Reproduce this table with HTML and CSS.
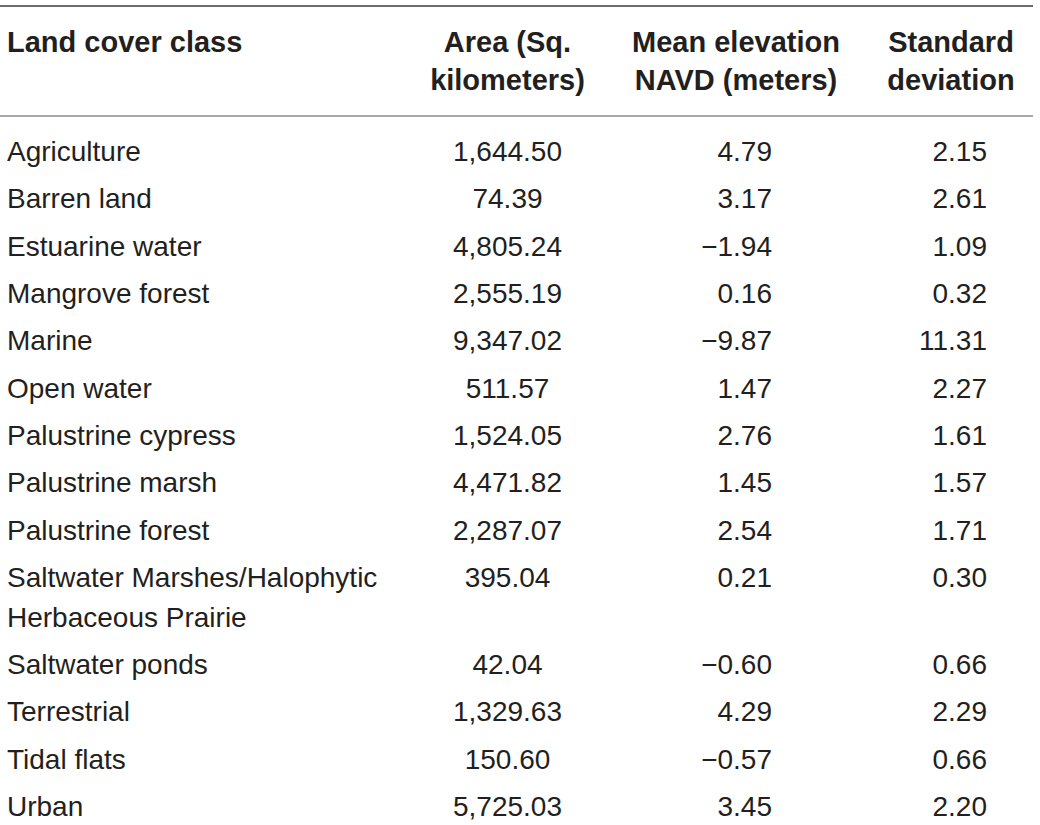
FILE: index.html
```html
<!DOCTYPE html>
<html lang="en">

<head>
    <meta charset="UTF-8">
    <meta name="viewport" content="width=device-width, initial-scale=1.0">
    <title>Land cover classes</title>
    <link rel="stylesheet" href="styles.css">
</head>

<body>
    <table class="data-table">
        <colgroup>
            <col class="col-class">
            <col class="col-area">
            <col class="col-mean">
            <col class="col-std">
        </colgroup>
        <thead>
            <tr>
                <th class="name">Land cover class</th>
                <th>Area (Sq.<br>kilometers)</th>
                <th>Mean elevation<br>NAVD (meters)</th>
                <th class="std">Standard<br>deviation</th>
            </tr>
        </thead>
        <tbody>
            <tr class="first-row">
                <td class="name">Agriculture</td>
                <td class="area">1,644.50</td>
                <td class="mean">4.79</td>
                <td class="std">2.15</td>
            </tr>
            <tr>
                <td class="name">Barren land</td>
                <td class="area">74.39</td>
                <td class="mean">3.17</td>
                <td class="std">2.61</td>
            </tr>
            <tr>
                <td class="name">Estuarine water</td>
                <td class="area">4,805.24</td>
                <td class="mean">&minus;1.94</td>
                <td class="std">1.09</td>
            </tr>
            <tr>
                <td class="name">Mangrove forest</td>
                <td class="area">2,555.19</td>
                <td class="mean">0.16</td>
                <td class="std">0.32</td>
            </tr>
            <tr>
                <td class="name">Marine</td>
                <td class="area">9,347.02</td>
                <td class="mean">&minus;9.87</td>
                <td class="std">11.31</td>
            </tr>
            <tr>
                <td class="name">Open water</td>
                <td class="area">511.57</td>
                <td class="mean">1.47</td>
                <td class="std">2.27</td>
            </tr>
            <tr>
                <td class="name">Palustrine cypress</td>
                <td class="area">1,524.05</td>
                <td class="mean">2.76</td>
                <td class="std">1.61</td>
            </tr>
            <tr>
                <td class="name">Palustrine marsh</td>
                <td class="area">4,471.82</td>
                <td class="mean">1.45</td>
                <td class="std">1.57</td>
            </tr>
            <tr>
                <td class="name">Palustrine forest</td>
                <td class="area">2,287.07</td>
                <td class="mean">2.54</td>
                <td class="std">1.71</td>
            </tr>
            <tr>
                <td class="name">Saltwater Marshes/Halophytic<br>Herbaceous Prairie</td>
                <td class="area">395.04</td>
                <td class="mean">0.21</td>
                <td class="std">0.30</td>
            </tr>
            <tr>
                <td class="name">Saltwater ponds</td>
                <td class="area">42.04</td>
                <td class="mean">&minus;0.60</td>
                <td class="std">0.66</td>
            </tr>
            <tr>
                <td class="name">Terrestrial</td>
                <td class="area">1,329.63</td>
                <td class="mean">4.29</td>
                <td class="std">2.29</td>
            </tr>
            <tr>
                <td class="name">Tidal flats</td>
                <td class="area">150.60</td>
                <td class="mean">&minus;0.57</td>
                <td class="std">0.66</td>
            </tr>
            <tr>
                <td class="name">Urban</td>
                <td class="area">5,725.03</td>
                <td class="mean">3.45</td>
                <td class="std">2.20</td>
            </tr>
        </tbody>
    </table>
</body>

</html>
```

FILE: styles.css
```css
body {
    margin: 0;
    padding: 5px 0 0 0;
    background-color: #ffffff;
    color: #231f20;
    font-family: "Liberation Sans", Arial, sans-serif;
}

.data-table {
    width: 1033px;
    table-layout: fixed;
    border-collapse: collapse;
    border-top: 2px solid #6d6d6d;
    font-size: 28px;
}

.col-class {
    width: 425px;
}

.col-area {
    width: 165px;
}

.col-mean {
    width: 292px;
}

.col-std {
    width: 151px;
}

th {
    font-size: 29px;
    font-weight: bold;
    line-height: 38px;
    text-align: center;
    vertical-align: top;
    padding: 16px 0 16px 0;
    border-bottom: 2px solid #a8a8a8;
}

th.name {
    text-align: left;
    padding-left: 7px;
}

th.std {
    padding-right: 13px;
}

td {
    line-height: 40px;
    padding: 3.67px 0;
    vertical-align: top;
    white-space: nowrap;
}

td.name {
    padding-left: 7px;
}

td.area {
    text-align: center;
}

td.mean {
    text-align: right;
    padding-right: 110px;
}

td.std {
    text-align: right;
    padding-right: 46px;
}

.first-row td {
    padding-top: 15px;
}
```
